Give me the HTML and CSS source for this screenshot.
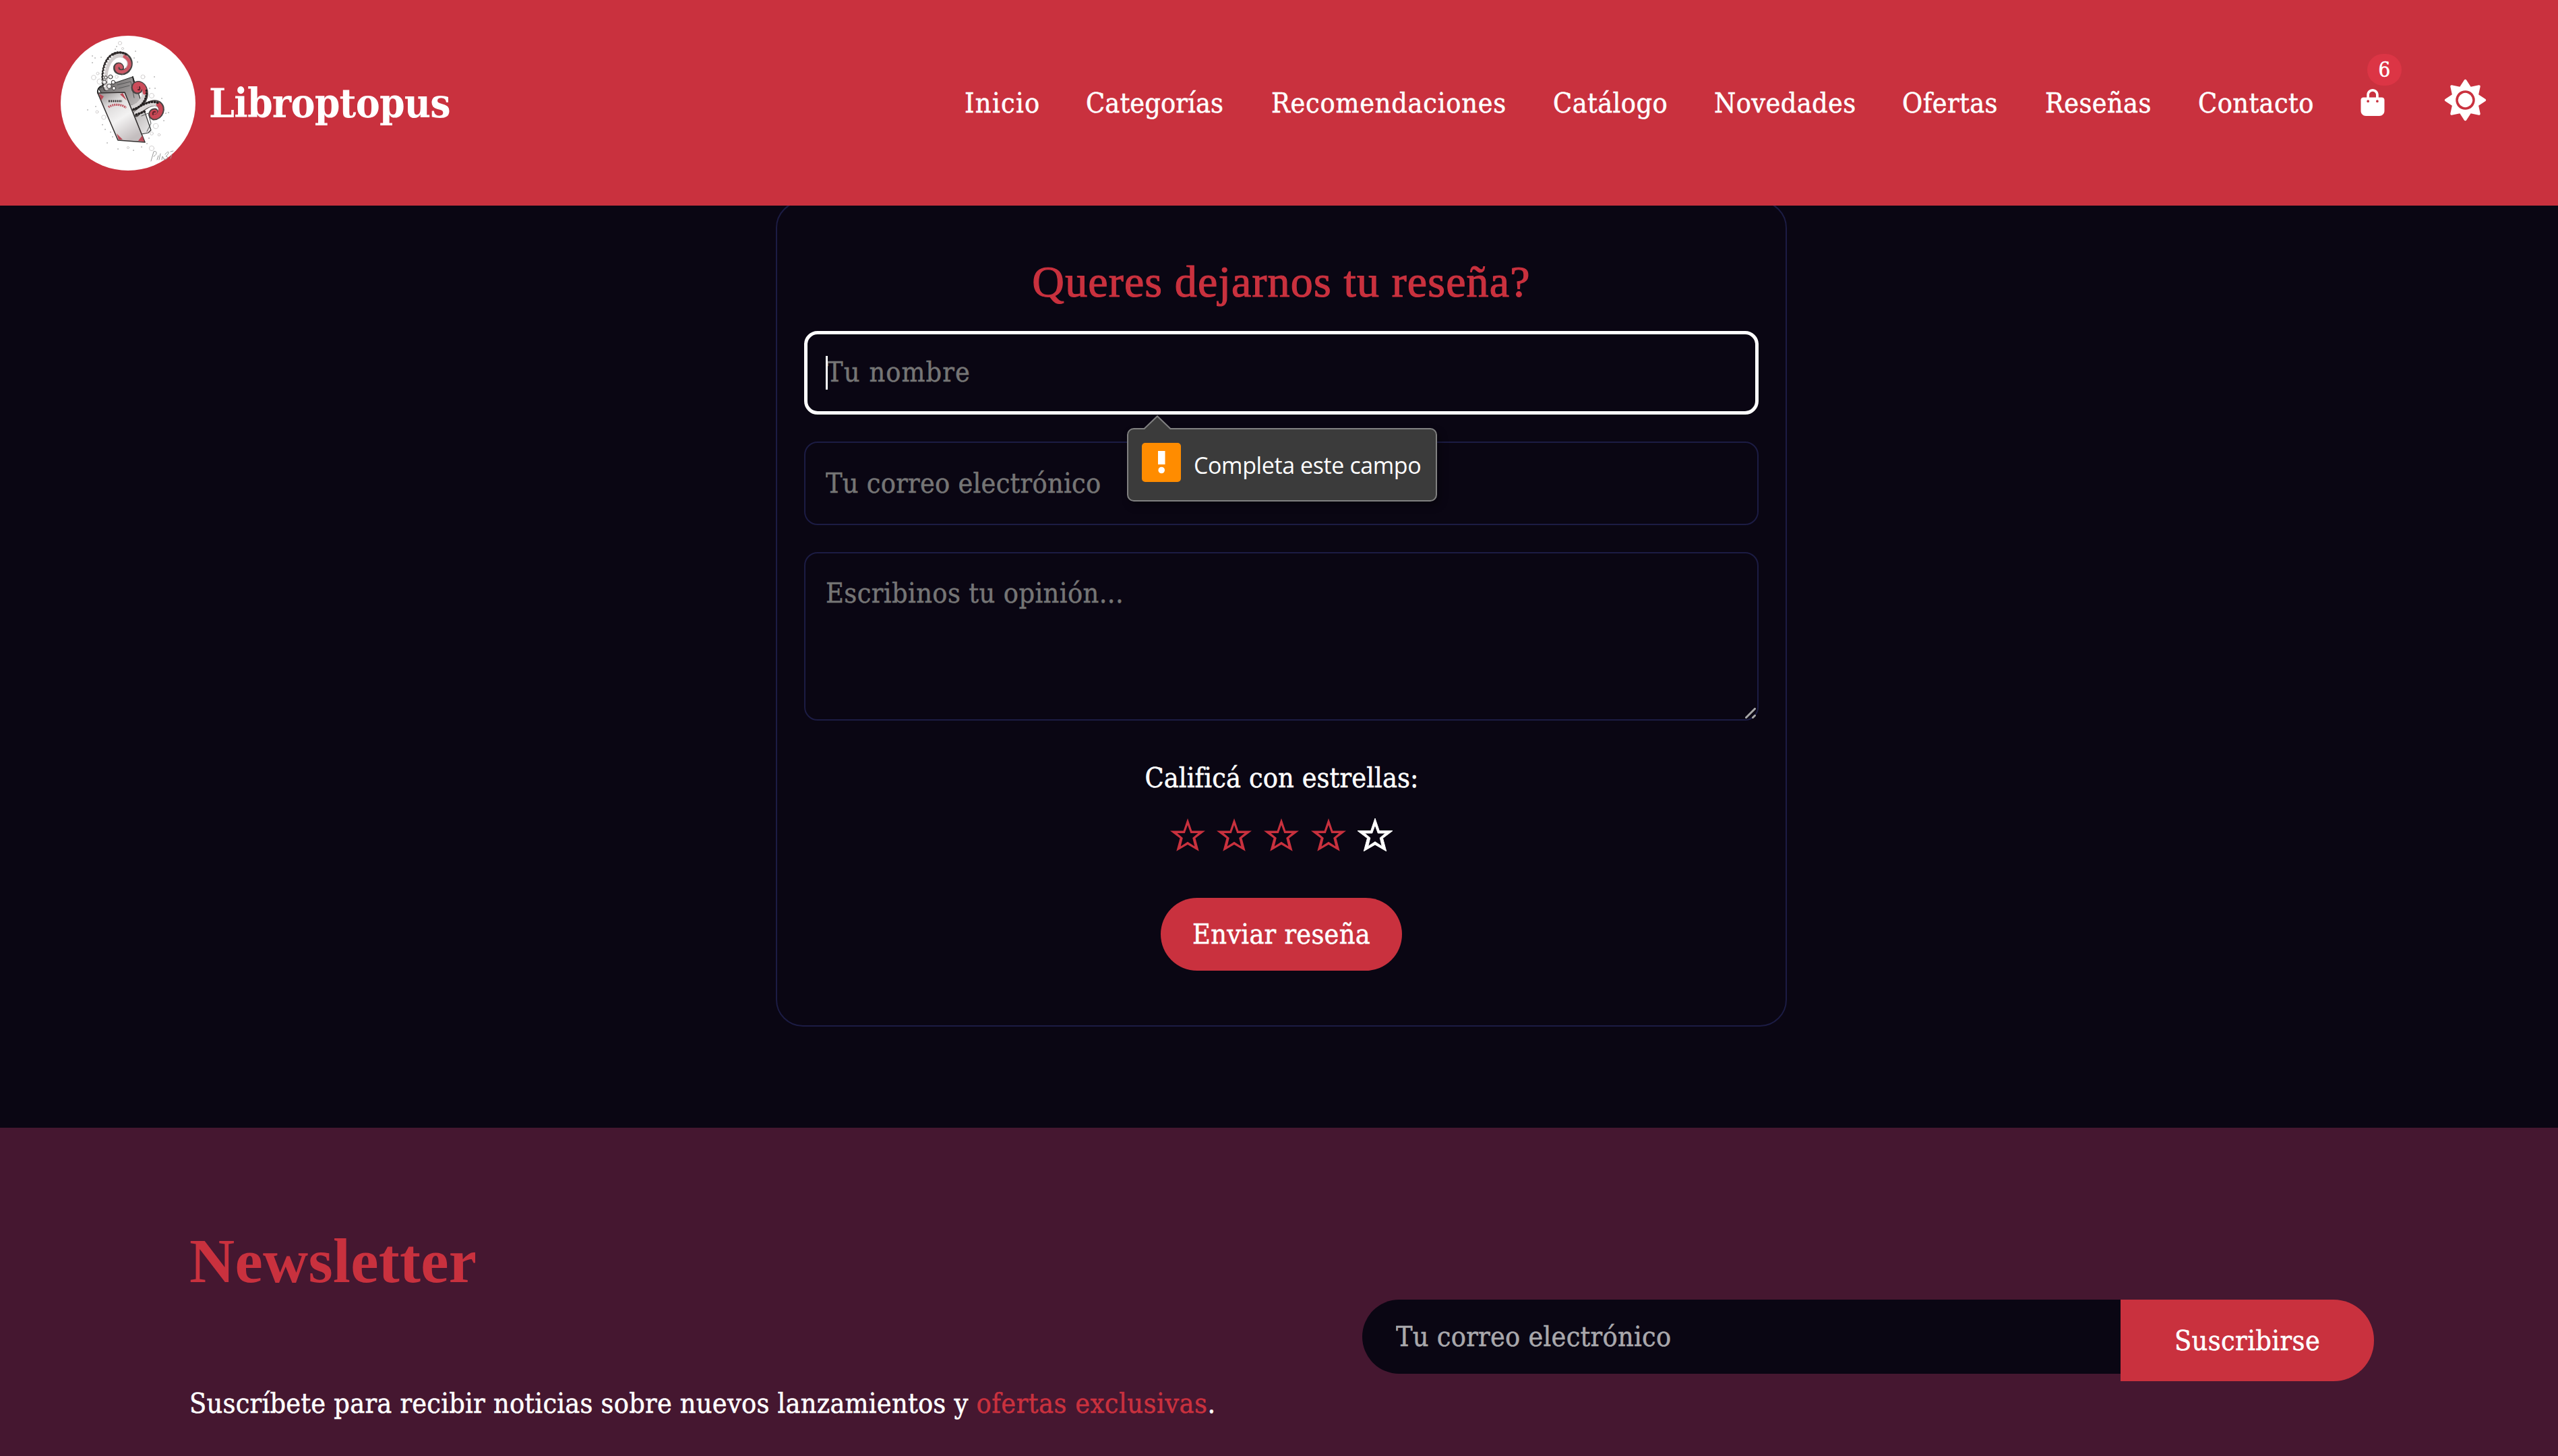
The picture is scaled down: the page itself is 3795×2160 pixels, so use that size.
FILE: index.html
```html
<!DOCTYPE html>
<html lang="es">
<head>
<meta charset="utf-8">
<title>Libroptopus</title>
<link rel="stylesheet" href="styles.css">
</head>
<body>
<header class="header">
  <a class="brand">
    <svg class="logo" viewBox="0 0 200 200" fill="none" stroke-linecap="round" stroke-linejoin="round">
      <defs>
        <linearGradient id="cover" x1="0" y1="0" x2=".6" y2="1">
          <stop offset="0" stop-color="#8a8585"/><stop offset=".3" stop-color="#dddbdb"/><stop offset=".6" stop-color="#f3f2f2"/><stop offset="1" stop-color="#c4bebf"/>
        </linearGradient>
        <linearGradient id="back" x1="0" y1="0" x2="1" y2="1">
          <stop offset="0" stop-color="#5a5757"/><stop offset=".5" stop-color="#aaa6a6"/><stop offset="1" stop-color="#efeded"/>
        </linearGradient>
      </defs>
      <circle cx="100" cy="100" r="100" fill="#fff"/>
      <path d="M56 78 107 61 134 140 130 144 100 150Z" fill="url(#back)" stroke="#333" stroke-width="1.2"/>
      <path d="M84 73 104 68 109 92M120 119 130 115 134 130 128 142M86 78 102 74" stroke="#555" stroke-width="1"/>
      <path d="M55 85C54 79 58 74 64 74M107 61 109 70" stroke="#222" stroke-width="1.8"/>
      <path d="M67 78C63 62 64 38 80 29 98 23 107 38 101 48 96 57 82 56 82 48 82 42 90 42 90 48" stroke="#4a4444" stroke-width="8"/>
      <path d="M68 78C65 62 66 40 81 31 95 25 105 37 100 47" stroke="#d2cdcd" stroke-width="6"/>
      <path d="M95 31C103 36 104 43 100 48 95 56 83 55 83 48 83 43 89 42 90 47" stroke="#cc5865" stroke-width="5"/>
      <path d="M63 74C60 56 64 34 78 27 86 23 94 25 99 29" stroke="#2d2929" stroke-width="3.5" stroke-dasharray=".6 3.600"/>
      <path d="M65 75C62 56 66 36 79 29" stroke="#f4f2f2" stroke-width="3" stroke-dasharray=".1 4.2"/>
      <g fill="#f1efef" stroke="#3b3838" stroke-width="1">
        <circle cx="65" cy="69" r="3"/><circle cx="72" cy="75" r="3.4"/><circle cx="78" cy="69" r="2.8"/><circle cx="79" cy="78" r="2.6"/><circle cx="74" cy="61" r="3"/><circle cx="67" cy="62" r="2.3"/>
      </g>
      <path d="M103 108C119 105 127 94 125 82 123 70 110 68 109 77 109 84 118 84 118 77" stroke="#4a4444" stroke-width="9"/>
      <path d="M102 107C117 104 124 94 124 83" stroke="#d6d2d2" stroke-width="6.500"/>
      <path d="M125 84C123 69 110 69 110 77 111 83 118 82 117 77" stroke="#cc4c5a" stroke-width="6.500"/>
      <path d="M115 80C117 81 118 79 117 76" stroke="#5c2028" stroke-width="2"/>
      <path d="M108 109C122 105 129 92 127 80" stroke="#242020" stroke-width="3" stroke-dasharray=".6 3.4"/>
      <path d="M112 116C120 108 135 96 145 101 154 107 148 121 138 121 132 119 135 111 140 112" stroke="#4a4444" stroke-width="9"/>
      <path d="M112 115C120 108 134 98 143 101" stroke="#dad6d6" stroke-width="6.500"/>
      <path d="M145 102C153 108 146 122 138 120 133 117 136 112 140 113" stroke="#c84755" stroke-width="6.500"/>
      <path d="M137 117C136 114 138 112 140 113" stroke="#5c2028" stroke-width="2"/>
      <path d="M112 108C122 102 135 94 147 101M112 117 126 112" stroke="#242020" stroke-width="3.4" stroke-dasharray=".6 3.6"/>
      <path d="M55 85 95 84 125 158 85 155Z" fill="url(#cover)" stroke="#343030" stroke-width="1.6"/>
      <path d="M57 86 64 90 60 96ZM92 85 98 96 88 87ZM83 145 92 154 86 154ZM121 148 124 157 115 156Z" fill="#b94a57"/>
      <path d="M71 97H91" stroke="#343030" stroke-width="3.2" stroke-dasharray="2 1.2" stroke-linecap="butt"/>
      <path d="M71 106C77 101 91 101 97 107" stroke="#bf5662" stroke-width="3.2" stroke-dasharray="2 1" stroke-linecap="butt"/>
      <g stroke="#cfcccc" stroke-width=".9">
        <circle cx="88" cy="11" r="2.6"/><circle cx="92" cy="19" r="1.6"/><circle cx="49" cy="62" r="3.4"/><circle cx="55" cy="56" r="2"/><circle cx="58" cy="68" r="4"/><circle cx="83" cy="61" r="2.3"/><circle cx="122" cy="61" r="3"/><circle cx="135" cy="89" r="3.6"/><circle cx="64" cy="121" r="3.2"/><circle cx="54" cy="113" r="2"/><circle cx="141" cy="134" r="3.8"/><circle cx="135" cy="145" r="2.4"/><circle cx="146" cy="147" r="1.8"/><circle cx="135" cy="167" r="3.6"/><circle cx="100" cy="166" r="1.6"/>
      </g>
      <path d="M47 40h.1M51 33h.1M60 32h.1M83 16h.1M81 20h.1M111 23h.1M109 33h.1M114 39h.1M47 30h.1M92 57h.1M40 110h.1M52 105h.1M62 132h.1M66 139h.1M74 143h.1M77 150h.1M69 159h.1M85 168h.1M108 170h.1M139 61h.1M140 78h.1M132 78h.1M150 93h.1M156 115h.1M160 114h.1M153 126h.1M131 152h.1M120 165h.1M128 160h.1" stroke="#777" stroke-width="1.3"/>
      <path d="M134 186 138 172C143 170 144 176 138 179M143 184 145 178M146 184 148 175M150 184 151 179 154 184M155 176C160 169 163 173 156 179 160 178 159 185 154 183M163 182 165 176M163 172 167 171" stroke="#999" stroke-width="1"/>
    </svg>
    <span class="brand-name">Libroptopus</span>
  </a>
  <nav class="nav">
    <a class="n-inicio">Inicio</a>
    <a class="n-categorias">Categorías</a>
    <a class="n-recomendaciones">Recomendaciones</a>
    <a class="n-catalogo">Catálogo</a>
    <a>Novedades</a>
    <a>Ofertas</a>
    <a>Reseñas</a>
    <a>Contacto</a>
    <a class="cart">
      <svg class="bag" viewBox="0 0 448 512" fill="#fff"><path d="M160 112c0-35.300 28.700-64 64-64s64 28.700 64 64v48H160zm-48 48H48c-26.500 0-48 21.500-48 48V416c0 53 43 96 96 96H352c53 0 96-43 96-96V208c0-26.500-21.500-48-48-48H336V112C336 50.100 285.900 0 224 0S112 50.100 112 112zm24 48a24 24 0 1 1 0 48 24 24 0 1 1 0-48zm152 24a24 24 0 1 1 48 0 24 24 0 1 1-48 0z"/></svg>
      <span class="badge">6</span>
    </a>
    <svg class="sun" viewBox="0 0 512 512" fill="#fff"><path transform="rotate(22.500 256 256)" d="M361.500 1.200c5 2.100 8.600 6.600 9.600 11.900L391 121l107.900 19.800c5.300 1 9.800 4.600 11.900 9.600s1.500 10.700-1.600 15.200L446.900 256l62.300 90.300c3.100 4.500 3.700 10.200 1.600 15.200s-6.600 8.600-11.900 9.600L391 391 371.100 498.900c-1 5.300-4.600 9.800-9.600 11.900s-10.700 1.500-15.200-1.600L256 446.900l-90.300 62.300c-4.500 3.100-10.200 3.700-15.200 1.600s-8.600-6.600-9.600-11.900L121 391 13.100 371.100c-5.300-1-9.800-4.600-11.900-9.600s-1.500-10.700 1.600-15.200L65.100 256 2.800 165.700c-3.100-4.500-3.700-10.200-1.600-15.200s6.600-8.600 11.900-9.600L121 121 140.900 13.100c1-5.300 4.600-9.800 9.600-11.900s10.700-1.500 15.200 1.600L256 65.100 346.300 2.800c4.500-3.100 10.200-3.700 15.200-1.600zM160 256a96 96 0 1 1 192 0 96 96 0 1 1-192 0zm224 0a128 128 0 1 0-256 0 128 128 0 1 0 256 0z"/></svg>
  </nav>
</header>
<main class="main">
  <form class="card">
    <h2 class="card-title">Queres dejarnos tu reseña?</h2>
    <div class="field-wrap">
      <input class="field field-name" type="text" placeholder="Tu nombre">
      <span class="caret"></span>
      <div class="tooltip">
        <svg class="tooltip-arrow" width="42" height="22" viewBox="0 0 42 22"><path d="M1 22V21.500L21 1.500 41 21.500V22Z" fill="#3b3b3b"/><path d="M1 20.500 21 1.500 41 20.500" fill="none" stroke="#808080" stroke-width="2"/></svg>
        <svg class="tooltip-icon" viewBox="0 0 58 58"><rect width="58" height="58" rx="5" fill="#ff8c00"/><rect x="24" y="12" width="10.500" height="20" fill="#fff"/><circle cx="29.200" cy="40.500" r="4.800" fill="#fff"/></svg>
        <span class="tooltip-text">Completa este campo</span>
      </div>
    </div>
    <input class="field field-mail" type="text" placeholder="Tu correo electrónico">
    <div class="field-wrap">
      <textarea class="field field-area" placeholder="Escribinos tu opinión..."></textarea>
      <svg class="grip" viewBox="0 0 16 16" stroke="#a8a8a8" stroke-width="3" stroke-linecap="round"><path d="M1.500 14.500 14.500 1.500M11.500 14.500 14.500 11.500"/></svg>
    </div>
    <p class="rate">Calificá con estrellas:</p>
    <div class="stars">
      <svg class="star" viewBox="0 0 52 49"><use href="#star"/></svg>
      <svg class="star" viewBox="0 0 52 49"><use href="#star"/></svg>
      <svg class="star" viewBox="0 0 52 49"><use href="#star"/></svg>
      <svg class="star" viewBox="0 0 52 49"><use href="#star"/></svg>
      <svg class="star star-off" viewBox="0 0 52 49"><path id="star" fill-rule="evenodd" d="M26 0 32.300 18.500H52L37.500 29.500 42.700 48.700 26 39 9.300 48.700 14.500 29.500 0 18.500H19.700ZM26 10 21.700 22H10.500L18.800 29 15.700 41.500 26 34.700 36.300 41.500 33.200 29 41.500 22H30.300Z"/></svg>
    </div>
    <button class="submit" type="button">Enviar reseña</button>
  </form>
</main>
<section class="newsletter">
  <div class="news-copy">
    <h2 class="news-title">Newsletter</h2>
    <p class="news-text">Suscríbete para recibir noticias sobre nuevos lanzamientos y <span class="accent">ofertas exclusivas</span>.</p>
  </div>
  <div class="news-form">
    <input class="news-input" type="text" placeholder="Tu correo electrónico">
    <button class="news-button" type="button">Suscribirse</button>
  </div>
</section>
</body>
</html>
```
FILE: styles.css
```css
* { box-sizing: border-box; margin: 0; }
body {
  height: 2160px;
  overflow: hidden;
  display: flex;
  flex-direction: column;
  background: #0a0613;
  color: #fff;
  font: 41px/60px "DejaVu Serif Condensed", "DejaVu Serif", serif;
  -webkit-text-stroke: .5px;
}
input, textarea, button { font: inherit; color: #fff; border: 0; outline: 0; -webkit-text-stroke: inherit; }

.header {
  position: relative;
  z-index: 2;
  flex: none;
  height: 305px;
  padding: 0 107px 0 90px;
  display: flex;
  align-items: center;
  justify-content: space-between;
  background: #c9313e;
}
.brand { display: flex; align-items: center; gap: 20px; }
.logo { width: 200px; height: 200px; }
.brand-name { font-size: 60px; font-weight: 700; letter-spacing: -.8px; -webkit-text-stroke: 0; }
.nav {
  display: grid;
  grid-template-columns: 180px 275px 418px 239px 279px 212px 227px 240px 126px 61px;
  align-items: center;
  letter-spacing: .4px;
  white-space: nowrap;
}
.n-inicio { letter-spacing: 1.3px; }
.n-categorias { letter-spacing: .1px; }
.n-recomendaciones { letter-spacing: .75px; }
.cart { position: relative; left: 1px; height: 40px; }
.bag { display: block; width: 36px; height: 40px; margin-top: -1px; }
.badge {
  position: absolute;
  left: 10px;
  top: -53px;
  width: 51px;
  height: 47px;
  border-radius: 24px;
  background: #dc3545;
  font-size: 31px;
  line-height: 46px;
  text-align: center;
}
.sun { width: 57px; height: 57px; justify-self: center; margin-top: -8px; overflow: visible; }

.main { flex: none; display: flex; justify-content: center; margin-top: -7px; padding: 0 0 150px 7px; }
.card {
  width: 1500px;
  height: 1225px;
  padding: 80px 40px 0;
  border: 2px solid #1c1c44;
  border-radius: 40px;
  display: flex;
  flex-direction: column;
  align-items: center;
}
.card-title {
  margin-bottom: 36px;
  font: 400 66px/75px "Liberation Serif", serif;
  letter-spacing: 1.16px;
  color: #c9313e;
  -webkit-text-stroke: 1.2px #c9313e;
}
.field-wrap { position: relative; width: 1416px; }
.field {
  display: block;
  width: 1416px;
  height: 124px;
  padding: 0 30px 1px;
  border: 2px solid #1c1c44;
  border-radius: 20px;
  background: transparent;
}
.field::placeholder { color: #757575; opacity: 1; }
.field-name {
  padding: 0 28px 2px;
  border: 5px solid #fff;
  letter-spacing: 1.1px;
}
.caret { position: absolute; left: 32px; top: 37px; width: 3px; height: 50px; background: #fff; }
.field-mail { margin: 40px 0; letter-spacing: .25px; }
.field-area { height: 250px; padding-top: 29px; resize: none; letter-spacing: .4px; }
.grip { position: absolute; right: 4px; bottom: 3px; width: 16px; height: 16px; }

.tooltip {
  position: absolute;
  z-index: 1;
  left: 479px;
  top: 144px;
  width: 460px;
  height: 109px;
  padding: 0 0 0 20px;
  display: flex;
  align-items: center;
  gap: 19px;
  border: 2px solid #808080;
  border-radius: 10px;
  background: #3b3b3b;
  box-shadow: 4px 6px 12px rgba(0, 0, 0, .35);
}
.tooltip-arrow { position: absolute; left: 22px; top: -21px; }
.tooltip-icon { width: 58px; height: 58px; margin-top: -7px; }
.tooltip-text { font: 34px/50px "Open Sans", sans-serif; letter-spacing: -.4px; white-space: nowrap; -webkit-text-stroke: 0; }

.rate { margin-top: 55px; padding-left: 1px; letter-spacing: .1px; }
.stars { display: flex; gap: 17.600px; margin: 30px 0 69px; }
.star { width: 52px; height: 49px; fill: #c9313e; overflow: visible; }
.star-off { fill: #fff; stroke: #fff; stroke-width: 1; }
.submit { width: 358px; height: 108px; border-radius: 54px; background: #c9313e; letter-spacing: .25px; padding: 0; }

.newsletter {
  flex: 1;
  display: flex;
  justify-content: space-between;
  padding: 143px 273px 0 281px;
  background: #451730;
}
.news-title { font: 700 93px/110px "Liberation Serif", serif; letter-spacing: .3px; color: #c9313e; -webkit-text-stroke: 0; }
.news-text { margin-top: 126px; letter-spacing: .23px; white-space: nowrap; }
.accent { color: #c9313e; letter-spacing: .5px; }
.news-form { display: flex; align-items: flex-start; padding-top: 112px; }
.news-input {
  width: 1125px;
  height: 110px;
  padding: 0 50px;
  border-radius: 55px 0 0 55px;
  background: #0a0613;
  letter-spacing: .25px;
}
.news-input::placeholder { color: #a9a8ac; opacity: 1; }
.news-button { width: 376px; height: 121px; border-radius: 0 60px 60px 0; background: #c9313e; letter-spacing: .4px; }
```
